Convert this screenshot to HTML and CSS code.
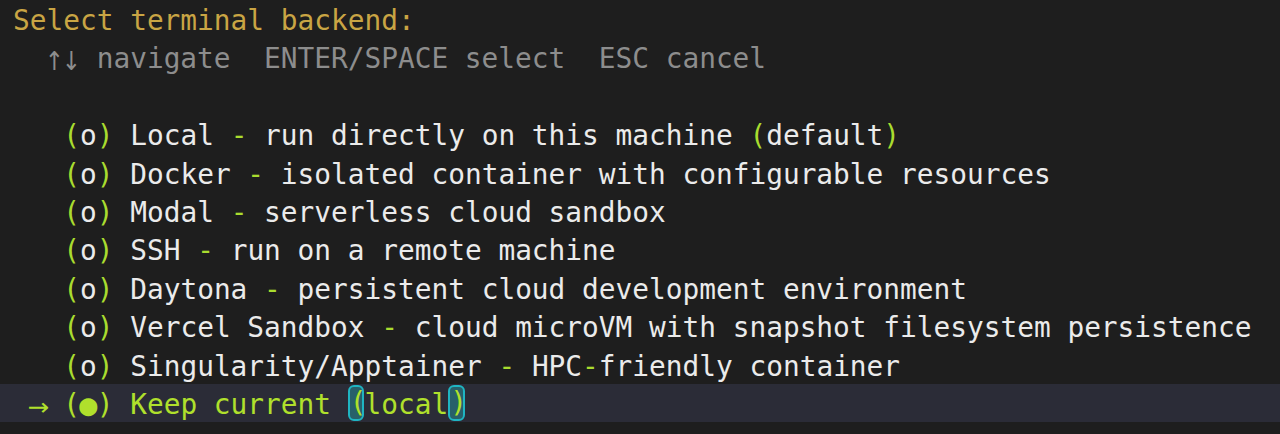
FILE: index.html
```html
<!DOCTYPE html>
<html>
<head>
<meta charset="utf-8">
<link rel="stylesheet" href="styles.css">
</head>
<body>
<div class="term">
  <div class="line title">Select terminal backend:</div>
  <div class="line hint">  <span class="arr">↑</span><span class="arr">↓</span> navigate  ENTER/SPACE select  ESC cancel</div>
  <div class="line"> </div>
  <div class="line">   <span class="g">(</span>o<span class="g">)</span> Local <span class="g">-</span> run directly on this machine <span class="g">(</span>default<span class="g">)</span></div>
  <div class="line">   <span class="g">(</span>o<span class="g">)</span> Docker <span class="g">-</span> isolated container with configurable resources</div>
  <div class="line">   <span class="g">(</span>o<span class="g">)</span> Modal <span class="g">-</span> serverless cloud sandbox</div>
  <div class="line">   <span class="g">(</span>o<span class="g">)</span> SSH <span class="g">-</span> run on a remote machine</div>
  <div class="line">   <span class="g">(</span>o<span class="g">)</span> Daytona <span class="g">-</span> persistent cloud development environment</div>
  <div class="line">   <span class="g">(</span>o<span class="g">)</span> Vercel Sandbox <span class="g">-</span> cloud microVM with snapshot filesystem persistence</div>
  <div class="line">   <span class="g">(</span>o<span class="g">)</span> Singularity/Apptainer <span class="g">-</span> HPC<span class="g">-</span>friendly container</div>
  <div class="line sel"> <span class="arr rarr">→</span> (<span class="dot">●</span>) Keep current <span class="match">(</span>local<span class="match">)</span></div>
</div>
</body>
</html>
```
FILE: styles.css
```css
html, body {
  margin: 0;
  padding: 0;
  background: #1e1e1e;
}
body {
  width: 1280px;
  height: 434px;
  overflow: hidden;
}
.term {
  font-family: "DejaVu Sans Mono", "Liberation Mono", monospace;
  font-size: 27.8px;
  color: #ebebeb;
}
.line {
  box-sizing: border-box;
  height: 38.4px;
  padding-top: 4px;
  line-height: 34.4px;
  white-space: pre;
  padding-left: 13px;
}
.title {
  color: #c9a544;
}
.hint {
  color: #8d8d8d;
}
.g {
  color: #a9dc2f;
}
.arr {
  display: inline-block;
  width: 16.74px;
  text-align: center;
  font-family: "DejaVu Sans", sans-serif;
  font-size: 19.9px;
  transform: scale(1.15, 1.3);
}
.rarr {
  transform: scale(1.3, 1.2);
}
.dot {
  display: inline-block;
  transform: scale(1.08);
}
.sel {
  background: #2b2c37;
  color: #b0e02c;
}
.match {
  display: inline-block;
  height: 36px;
  line-height: 32px;
  box-sizing: border-box;
  border: 2px solid #1fb5c2;
  border-radius: 6px;
  background: #28606a;
  vertical-align: top;
  margin-top: -3px;
  width: 16.74px;
  text-align: center;
}
```
